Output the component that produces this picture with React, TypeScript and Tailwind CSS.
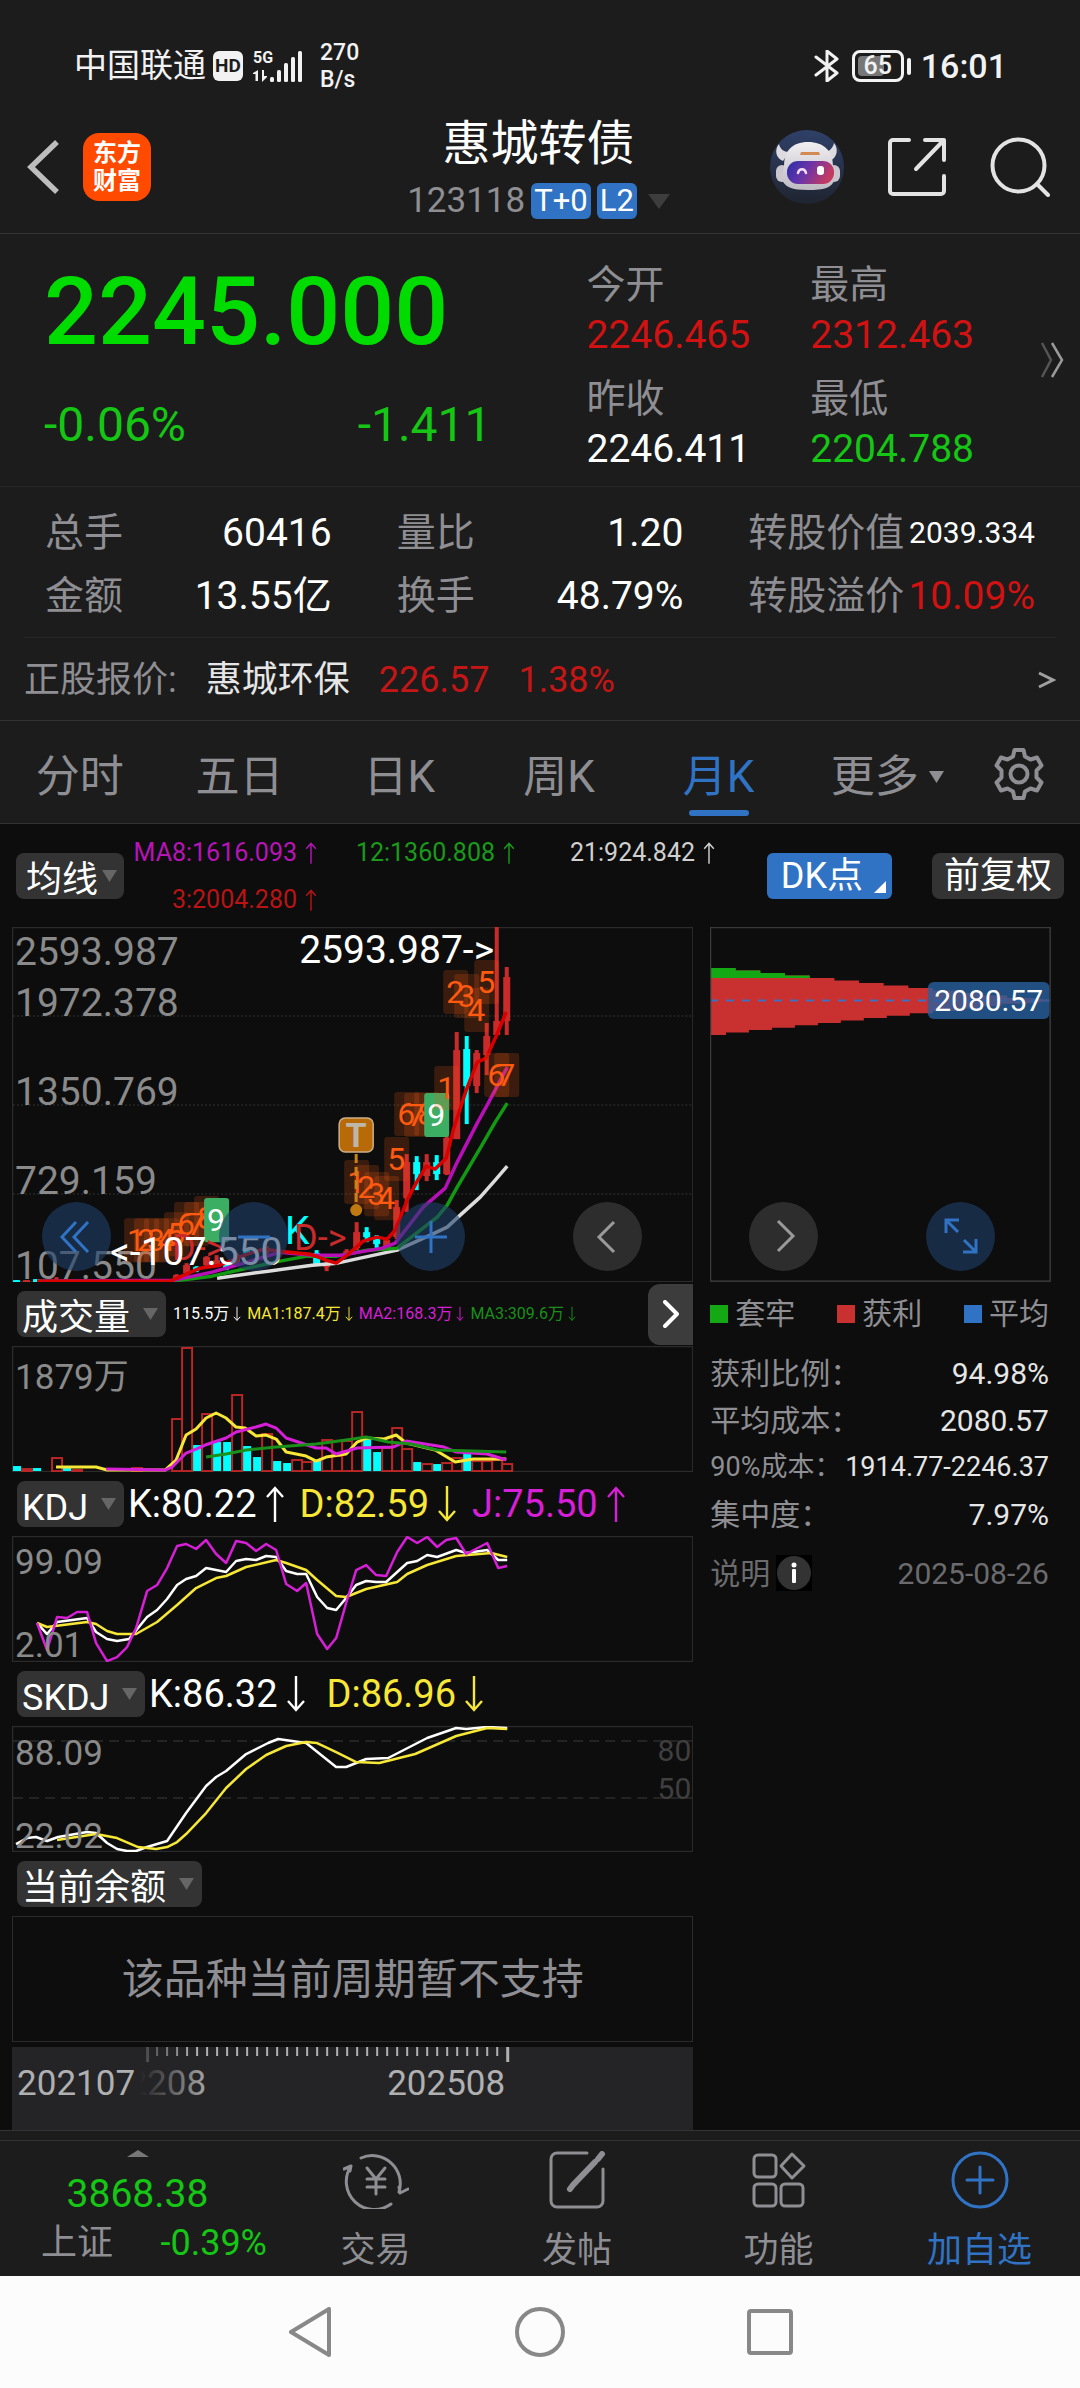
import { useState } from 'react';
import type { ReactNode } from 'react';

type Color = 'up' | 'down';

interface Candle {
  x: number;
  color: Color;
  high: number;
  low: number;
  top: number;
  bottom: number;
}

interface Tag {
  n: string;
  x: number;
  y: number;
}

const RED = '#c92a2a';
const CYAN = '#00ffff';
const YELLOW = '#f7e838';
const MAGENTA = '#d61fd6';

const CANDLES: Candle[] = [
  { x: 4, color: 'down', high: 353, low: 355, top: 353, bottom: 355 },
  { x: 14, color: 'up', high: 353, low: 355, top: 353, bottom: 355 },
  { x: 24, color: 'down', high: 352, low: 355, top: 352, bottom: 355 },
  { x: 44, color: 'up', high: 350, low: 355, top: 353, bottom: 355 },
  { x: 164, color: 'up', high: 347, low: 352, top: 348, bottom: 352 },
  { x: 174, color: 'up', high: 336, low: 349, top: 338, bottom: 346 },
  { x: 184, color: 'down', high: 339, low: 345, top: 340, bottom: 343 },
  { x: 194, color: 'up', high: 329, low: 341, top: 330, bottom: 338 },
  { x: 204, color: 'up', high: 328, low: 340, top: 333, bottom: 338 },
  { x: 214, color: 'down', high: 334, low: 343, top: 338, bottom: 341 },
  { x: 224, color: 'up', high: 326, low: 338, top: 328, bottom: 335 },
  { x: 234, color: 'down', high: 322, low: 328, top: 323, bottom: 326 },
  { x: 254, color: 'up', high: 319, low: 327, top: 321, bottom: 325 },
  { x: 304, color: 'down', high: 323, low: 338, top: 326, bottom: 337 },
  { x: 314, color: 'up', high: 332, low: 344, top: 336, bottom: 340 },
  { x: 334, color: 'up', high: 322, low: 329, top: 324, bottom: 327 },
  { x: 344, color: 'up', high: 295, low: 323, top: 305, bottom: 321 },
  { x: 354, color: 'down', high: 300, low: 315, top: 305, bottom: 310 },
  { x: 364, color: 'down', high: 308, low: 322, top: 312, bottom: 317 },
  { x: 374, color: 'up', high: 311, low: 320, top: 313, bottom: 319 },
  { x: 384, color: 'up', high: 273, low: 312, top: 280, bottom: 310 },
  { x: 394, color: 'up', high: 227, low: 285, top: 235, bottom: 271 },
  { x: 404, color: 'down', high: 229, low: 263, top: 235, bottom: 247 },
  { x: 414, color: 'up', high: 227, low: 254, top: 235, bottom: 249 },
  { x: 424, color: 'down', high: 228, low: 253, top: 235, bottom: 247 },
  { x: 434, color: 'up', high: 205, low: 248, top: 211, bottom: 247 },
  { x: 444, color: 'up', high: 105, low: 212, top: 123, bottom: 212 },
  { x: 454, color: 'down', high: 109, low: 197, top: 122, bottom: 159 },
  { x: 464, color: 'up', high: 123, low: 166, top: 126, bottom: 159 },
  { x: 474, color: 'up', high: 96, low: 148, top: 109, bottom: 128 },
  { x: 484, color: 'up', high: 0, low: 108, top: 94, bottom: 108 },
  { x: 494, color: 'up', high: 40, low: 108, top: 50, bottom: 94 },
];

const PRICE_LINES = [
  { stroke: '#dcdcdc', points: '205,351 256,344 300,338 325,336 385,323 418,308 435,300 448,288 468,270 483,253 495,239' },
  { stroke: '#139a13', points: '25,354 160,354 200,349 240,340 268,334 295,329 325,329 355,323 385,321 425,290 435,278 445,260 468,221 483,195 495,176' },
  { stroke: '#b80fb8', points: '25,354 162,353 200,345 235,335 268,325 300,328 330,328 370,321 383,316 411,280 433,261 445,235 465,196 476,176 495,140' },
  { stroke: '#d90000', points: '25,354 158,354 188,341 208,338 235,327 252,322 268,324 298,327 314,333 324,336 335,328 351,314 365,310 375,312 383,303 395,273 405,254 414,239 423,242 434,231 441,203 454,163 465,135 474,131 484,109 494,85' },
];

const TAGS: Tag[] = [
  { n: '1', x: 112, y: 291 },
  { n: '2', x: 122, y: 291 },
  { n: '3', x: 132, y: 291 },
  { n: '4', x: 142, y: 291 },
  { n: '5', x: 152, y: 285 },
  { n: '6', x: 162, y: 275 },
  { n: '7', x: 172, y: 275 },
  { n: '8', x: 182, y: 269 },
  { n: '9', x: 192, y: 271 },
  { n: '1', x: 332, y: 233 },
  { n: '2', x: 342, y: 238 },
  { n: '3', x: 352, y: 245 },
  { n: '4', x: 362, y: 249 },
  { n: '5', x: 372, y: 210 },
  { n: '6', x: 382, y: 165 },
  { n: '7', x: 392, y: 166 },
  { n: '8', x: 402, y: 165 },
  { n: '9', x: 412, y: 166 },
  { n: '1', x: 422, y: 139 },
  { n: '2', x: 431, y: 43 },
  { n: '3', x: 442, y: 47 },
  { n: '4', x: 452, y: 61 },
  { n: '5', x: 462, y: 33 },
  { n: '6', x: 472, y: 126 },
  { n: '7', x: 482, y: 126 },
];

// [month index, top of bar, direction]
const VOLUMES: [number, number, Color][] = [
  [0, 120, 'down'], [1, 122, 'up'], [2, 122, 'down'], [4, 111, 'up'], [5, 122, 'down'], [6, 123, 'up'],
  [12, 121, 'up'], [16, 72, 'up'], [17, 1, 'up'], [18, 99, 'down'], [19, 67, 'up'], [20, 96, 'down'],
  [21, 96, 'down'], [22, 48, 'up'], [23, 100, 'down'], [24, 111, 'down'], [25, 87, 'up'], [26, 115, 'down'],
  [27, 117, 'down'], [28, 113, 'up'], [29, 115, 'up'], [30, 114, 'down'], [31, 93, 'up'], [32, 109, 'up'],
  [33, 94, 'up'], [34, 65, 'up'], [35, 93, 'down'], [36, 106, 'down'], [37, 101, 'up'], [38, 81, 'up'],
  [39, 102, 'up'], [40, 116, 'down'], [41, 117, 'up'], [42, 118, 'down'], [43, 116, 'up'], [44, 111, 'up'],
  [45, 108, 'down'], [46, 114, 'up'], [47, 114, 'up'], [48, 113, 'up'], [49, 117, 'up'],
];

const VOLUME_LINES = [
  { stroke: YELLOW, points: '44,121 84,121 95,124 153,124 164,114 174,89 184,83 194,72 204,67 214,72 224,81 233,82 244,90 254,89 264,93 274,106 294,110 304,115 314,111 334,108 345,96 354,92 372,93 384,89 394,97 423,104 443,116 461,113 494,113' },
  { stroke: MAGENTA, points: '94,123 153,124 160,121 174,107 184,103 193,99 214,92 224,86 244,81 254,78 264,82 274,92 304,102 314,102 324,108 345,102 381,101 394,95 432,101 444,106 475,108 494,114' },
  { stroke: '#1a8f1a', points: '194,111 214,108 234,104 264,101 304,98 334,94 354,91 376,96 399,98 425,104 494,106' },
];

const KDJ_LINES = [
  { stroke: '#ffffff', points: '25,87 35,98 45,86 75,82 84,96 95,103 105,105 117,103 135,81 145,74 155,63 165,49 174,43 184,40 194,32 214,36 224,25 234,23 244,24 254,20 264,21 274,35 285,38 294,38 305,61 315,72 324,74 334,62 344,49 354,45 364,46 374,46 395,27 405,25 415,19 425,21 444,14 454,17 475,14 486,24 495,24' },
  { stroke: YELLOW, points: '25,87 35,91 75,86 84,88 95,95 105,98 124,98 145,86 165,69 184,52 204,42 214,40 234,31 264,24 274,27 294,34 305,44 324,60 334,61 354,53 385,46 395,38 415,29 444,20 479,17 495,21' },
  { stroke: MAGENTA, points: '25,87 35,114 45,81 55,82 65,76 75,76 84,107 95,125 105,121 115,111 124,92 135,55 145,49 155,32 165,10 174,8 184,13 194,4 204,18 214,27 224,5 234,7 244,15 254,8 264,14 274,48 285,55 294,47 305,98 315,113 324,102 334,67 344,34 354,29 364,39 374,40 385,16 395,1 405,7 415,1 425,11 434,4 444,2 454,18 475,7 486,32 495,30' },
];

const SKDJ_LINES = [
  { stroke: '#ffffff', points: '4,118 15,112 24,111 35,115 46,111 75,106 84,107 95,117 105,123 115,125 124,125 135,121 155,115 174,87 194,60 204,51 214,45 234,28 256,17 266,13 294,17 324,41 334,41 354,33 376,32 415,12 444,2 454,3 475,1 495,2' },
  { stroke: YELLOW, points: '45,114 84,108 105,112 126,121 144,123 155,121 165,116 174,108 194,87 214,62 234,43 254,29 274,20 294,16 305,17 324,26 344,36 367,37 403,28 444,10 475,2 495,3' },
];

const TABS = ['分时', '五日', '日K', '周K', '月K'];

function Caret({ className = 'text-[#666]' }: { className?: string }) {
  return (
    <svg className={`h-3 w-[15px] shrink-0 ${className}`} viewBox="0 0 15 12" aria-hidden="true">
      <path d="M0 0h15L7.500 12z" fill="currentColor" />
    </svg>
  );
}

function Arrow({ up, className = 'h-9 w-5' }: { up?: boolean; className?: string }) {
  return (
    <svg className={`shrink-0 ${className}`} viewBox="0 0 20 36" fill="none" stroke="currentColor" strokeWidth="2.400" aria-hidden="true">
      {up ? <path d="M10 36V2M2 11l8-9 8 9" /> : <path d="M10 0v34M2 25l8 9 8-9" />}
    </svg>
  );
}

function Picker({ label, value, tight }: { label: string; value: string; tight?: boolean }) {
  return (
    <div className={`flex h-[46px] shrink-0 items-center rounded-lg bg-[#333] text-white ${tight ? 'gap-[3px] pr-[7px] pl-[10px]' : 'gap-3 pr-2 pl-[5px]'}`}>
      <select aria-label={label} className="h-[46px] appearance-none bg-transparent text-[36px] outline-none" defaultValue={value}>
        <option value={value}>{value}</option>
      </select>
      <Caret />
    </div>
  );
}

function StatusBar() {
  return (
    <div className="flex items-center justify-between pt-[39px] pr-[73px] pl-[74px] text-[#f2f2f2]">
      <div className="flex items-center">
        <span className="text-[33px] leading-[54px]">中国联通</span>
        <span className="ml-[7px] flex h-[30px] w-[30px] items-center justify-center rounded-md bg-[#f2f2f2] text-[19px] font-bold text-[#1c1c1c]">HD</span>
        <svg className="ml-[10px] h-[34px] w-[51px]" viewBox="0 0 51 34" fill="#f2f2f2" aria-label="5G">
          <text x="0" y="14" fontSize="16" fontWeight="700" fontFamily="Roboto">5G</text>
          <path d="M5 21v11H2.500v-7H0v-1zM9 21h2v6h3v1l-5 5z" />
          <rect x="17" y="28" width="4" height="5" rx="1.500" />
          <rect x="24" y="21" width="4" height="12" rx="1.500" />
          <rect x="31" y="14" width="4" height="19" rx="1.500" />
          <rect x="38" y="8" width="4" height="25" rx="1.500" />
          <rect x="45" y="2" width="4" height="31" rx="1.500" />
        </svg>
        <span className="ml-4 text-[23px] leading-[27px] font-medium">
          270
          <br />
          B/s
        </span>
      </div>
      <div className="flex items-center">
        <svg className="h-8 w-[26px]" viewBox="0 0 26 32" fill="none" stroke="currentColor" strokeWidth="3" strokeLinejoin="round" strokeLinecap="round" aria-label="蓝牙">
          <path d="M2 7l21 16-10 8V1l10 8L2 25" />
        </svg>
        <div className="relative ml-3 flex h-8 w-[52px] items-center justify-center rounded-lg border-[3px] border-[#f2f2f2] text-[25px] font-medium">
          <span className="absolute inset-y-[3px] left-[3px] w-[26px] rounded-sm bg-[#777]" />
          <span className="relative">65</span>
        </div>
        <span className="ml-[3px] h-[17px] w-1 rounded-full bg-[#f2f2f2]" />
        <span className="ml-[10px] text-[34px] leading-[54px] font-medium">16:01</span>
      </div>
    </div>
  );
}

function Robot() {
  return (
    <svg className="h-[74px] w-[74px]" viewBox="0 0 74 74" aria-hidden="true">
      <defs>
        <linearGradient id="sky" x1="0" y1="0" x2="0" y2="1">
          <stop offset="0" stopColor="#2f4068" />
          <stop offset="1" stopColor="#1f2430" />
        </linearGradient>
        <linearGradient id="visor" x1="0" y1="0" x2="1" y2="0.300">
          <stop offset="0" stopColor="#2a2fa8" />
          <stop offset="0.500" stopColor="#6b34a8" />
          <stop offset="1" stopColor="#c23a62" />
        </linearGradient>
        <linearGradient id="shell" x1="0" y1="0" x2="0" y2="1">
          <stop offset="0" stopColor="#f1eff2" />
          <stop offset="1" stopColor="#bdbac2" />
        </linearGradient>
      </defs>
      <circle cx="37" cy="37" r="37" fill="url(#sky)" />
      <path d="M9 14c-5 6-3 14 4 17l6-9c-5 0-9-3-10-8zM64 13c5 6 3 15-4 18l-6-9c5 0 9-4 10-9z" fill="#dddbe0" />
      <rect x="6" y="35" width="12" height="17" rx="6" fill="#c9c6cd" />
      <rect x="58" y="35" width="12" height="17" rx="6" fill="#c9c6cd" />
      <path d="M38 12c16 0 25 9 25 24 0 5 3 9 2 13-3 9-11 11-27 11s-24-3-26-11c-1-5 2-8 2-13 0-15 8-24 24-24z" fill="url(#shell)" />
      <path d="M31 22h18l1 3H30z" fill="#d38a52" />
      <rect x="17" y="31" width="47" height="23" rx="11" fill="url(#visor)" />
      <path d="M28 43c1-5 7-5 8 0" fill="none" stroke="#f3dcf6" strokeWidth="2.500" strokeLinecap="round" />
      <rect x="47" y="36" width="7" height="9" rx="3" fill="#fff" />
    </svg>
  );
}

function Header() {
  return (
    <header className="border-b border-[#333] bg-[#1c1c1c]">
      <StatusBar />
      <div className="grid grid-cols-[1fr_auto_1fr] items-center pt-[21px] pr-[30px] pb-[14px] pl-[27px]">
        <div className="flex items-center gap-6">
          <button type="button" aria-label="返回">
            <svg className="h-[54px] w-8" viewBox="0 0 32 54" fill="none" stroke="#bdbdbd" strokeWidth="5.500">
              <path d="M30 2L4 27l26 25" />
            </svg>
          </button>
          <a href="#home" className="flex h-[68px] w-[68px] items-center justify-center rounded-2xl bg-[#ff4a00] text-center text-[24px] leading-7 font-bold text-white">
            东方
            <br />
            财富
          </a>
        </div>
        <div className="text-center">
          <h1 className="text-[48px] leading-[60px] text-white">惠城转债</h1>
          <div className="mt-[9px] flex items-center justify-center">
            <span className="text-[35px] leading-9 text-[#8e8e93]">123118</span>
            <span className="ml-[6px] rounded-md bg-[#3073c4] px-[3px] text-[31px] leading-9 text-white">T+0</span>
            <span className="ml-[6px] rounded-md bg-[#3073c4] px-[3px] text-[31px] leading-9 text-white">L2</span>
            <svg className="ml-[11px] h-[15px] w-[22px]" viewBox="0 0 22 15" aria-hidden="true">
              <path d="M0 0h22L11 15z" fill="#3d3d3d" />
            </svg>
          </div>
        </div>
        <div className="flex items-center justify-end gap-11">
          <button type="button" aria-label="智能助手">
            <Robot />
          </button>
          <button type="button" aria-label="分享">
            <svg className="h-[58px] w-[58px]" viewBox="0 0 58 58" fill="none" stroke="#e3e3e3" strokeWidth="4" strokeLinecap="round" strokeLinejoin="round">
              <path d="M21 2H5a3 3 0 0 0-3 3v48a3 3 0 0 0 3 3h48a3 3 0 0 0 3-3V38M37 2h19v20M55 3L28 31" />
            </svg>
          </button>
          <button type="button" aria-label="搜索">
            <svg className="h-[60px] w-[60px]" viewBox="0 0 60 60" fill="none" stroke="#e3e3e3" strokeWidth="4" strokeLinecap="round">
              <circle cx="28.500" cy="28.500" r="26" />
              <path d="M47 47l11 11" />
            </svg>
          </button>
        </div>
      </div>
    </header>
  );
}

function Quote({ label, value, className }: { label: string; value: string; className: string }) {
  return (
    <div className="text-[39px] leading-[50px]">
      <div className="text-[#8e8e93]">{label}</div>
      <div className={className}>{value}</div>
    </div>
  );
}

function Stat({ label, value, className = 'text-white', small }: { label: string; value: string; className?: string; small?: boolean }) {
  return (
    <div className="flex items-center justify-between whitespace-nowrap leading-[50px]">
      <span className="text-[39px] text-[#8e8e93]">{label}</span>
      <span className={`${small ? 'text-[30px]' : 'text-[39px]'} ${className}`}>{value}</span>
    </div>
  );
}

function PricePanel() {
  return (
    <section className="bg-[#1c1c1c]">
      <div className="relative grid grid-cols-[543fr_224fr_270fr] border-b border-[#262626] pt-[26px] pb-3 pl-[44px]">
        <div className="pt-1 pr-[95px]">
          <div className="text-[95px] leading-[96px] font-medium text-[#00dc00]">2245.000</div>
          <div className="mt-[41px] flex justify-between text-[48px] leading-[48px] text-[#15c615]">
            <span>-0.06%</span>
            <span>-1.411</span>
          </div>
        </div>
        <div className="flex flex-col gap-[14px]">
          <Quote label="今开" value="2246.465" className="text-[#d01212]" />
          <Quote label="昨收" value="2246.411" className="text-white" />
        </div>
        <div className="flex flex-col gap-[14px]">
          <Quote label="最高" value="2312.463" className="text-[#d01212]" />
          <Quote label="最低" value="2204.788" className="text-[#15c615]" />
        </div>
        <button type="button" aria-label="更多行情" className="absolute inset-y-0 right-4">
          <svg className="h-9 w-6" viewBox="0 0 24 36" fill="none" strokeWidth="2.500">
            <path d="M2 1l9 17-9 17" stroke="#555" />
            <path d="M12 1l10 17-10 17" stroke="#999" />
          </svg>
        </button>
      </div>
      <div className="grid grid-cols-3 gap-x-[65px] gap-y-[13px] px-[45px] pt-[21px] pb-4">
        <Stat label="总手" value="60416" />
        <Stat label="量比" value="1.20" />
        <Stat label="转股价值" value="2039.334" small />
        <Stat label="金额" value="13.55亿" />
        <Stat label="换手" value="48.79%" />
        <Stat label="转股溢价" value="10.09%" className="text-[#d01212]" />
      </div>
      <a href="#stock" className="mx-6 flex items-center gap-[29px] border-t border-[#262626] pt-[17px] pb-[15px] text-[36px] leading-[50px]">
        <span className="text-[#8e8e93]">正股报价:</span>
        <span className="text-[#e6e6e6]">惠城环保</span>
        <span className="text-[#c41616]">226.57</span>
        <span className="text-[#c41616]">1.38%</span>
        <svg className="ml-auto h-[18px] w-[18px]" viewBox="0 0 18 18" fill="none" stroke="#a0a0a0" strokeWidth="3" aria-hidden="true">
          <path d="M1 2l14 7-14 7" />
        </svg>
      </a>
    </section>
  );
}

function PeriodTabs() {
  const [active, setActive] = useState('月K');

  return (
    <nav className="grid grid-cols-[repeat(6,160fr)_122fr] border-y border-[#333] bg-[#1c1c1c] pt-[26px] pb-[7px] text-[44px] leading-[60px] text-[#8e8e93]">
      {TABS.map(tab => (
        <button key={tab} type="button" onClick={() => setActive(tab)} className="flex flex-col items-center">
          <span className={active === tab ? 'text-[#3073c4]' : ''}>{tab}</span>
          <span className={`mt-[3px] h-[6px] w-[60px] rounded-full ${active === tab ? 'bg-[#3073c4]' : ''}`} />
        </button>
      ))}
      <button type="button" className="flex h-[60px] items-center justify-center gap-[10px] pl-[18px]">
        更多
        <Caret className="text-[#8e8e93]" />
      </button>
      <button type="button" aria-label="设置" className="flex h-[54px] items-center justify-center">
        <svg className="h-[52px] w-[52px]" viewBox="0 0 52 52" fill="none" stroke="#8e8e93" strokeWidth="4" strokeLinejoin="round">
          <path d="M21.500 2h9l1.500 6.500 5.500 3 6.500-2 4.500 8-5 5v7l5 5-4.500 8-6.500-2-5.500 3-1.500 6.500h-9L20 43.500l-5.500-3-6.500 2-4.500-8 5-5v-7l-5-5 4.500-8 6.500 2 5.500-3z" />
          <circle cx="26" cy="26" r="8.500" />
        </svg>
      </button>
    </nav>
  );
}

function MaValue({ text, className }: { text: string; className: string }) {
  return (
    <span className={`flex items-center justify-end gap-2 ${className}`}>
      {text}
      <Arrow up className="h-[22px] w-3" />
    </span>
  );
}

function ChartToolbar() {
  return (
    <div className="flex items-center px-4 pt-[5px] pb-1">
      <Picker label="主图指标" value="均线" tight />
      <div className="grid grid-cols-[193px_198px_200px] text-[25px] leading-[47px]">
        <MaValue text="MA8:1616.093" className="text-[#b714b7]" />
        <MaValue text="12:1360.808" className="text-[#1a9a1a]" />
        <MaValue text="21:924.842" className="text-[#d0d0d0]" />
        <MaValue text="3:2004.280" className="text-[#b81414]" />
      </div>
      <button type="button" className="relative ml-auto rounded-md bg-[#3073c4] pr-[29px] pl-[14px] text-[36px] leading-[46px] text-white">
        DK点
        <svg className="absolute right-[6px] bottom-[6px] h-3 w-3" viewBox="0 0 12 12" aria-hidden="true">
          <path d="M12 0v12H0z" fill="#fff" />
        </svg>
      </button>
      <button type="button" className="ml-10 rounded-lg bg-[#333] px-3 text-[36px] leading-[46px] text-white">前复权</button>
    </div>
  );
}

function RoundButton({ label, gray, children }: { label: string; gray?: boolean; children: ReactNode }) {
  return (
    <button
      type="button"
      aria-label={label}
      className={`flex h-[69px] w-[69px] items-center justify-center rounded-full ${gray ? 'bg-[#2d2d2d]' : 'bg-[#1e3f6b]/60'}`}
    >
      <svg className="h-11 w-11" viewBox="0 0 44 44" fill="none" stroke={gray ? '#9a9a9a' : '#3073c4'} strokeWidth="3">
        {children}
      </svg>
    </button>
  );
}

function Frame({ height }: { height: number }) {
  return <rect x="0.500" y="0.500" width="680" height={height - 1} fill="none" stroke="#2b2b2b" strokeWidth="1.500" />;
}

function Lines({ lines, width }: { lines: { stroke: string; points: string }[]; width: number }) {
  return (
    <>
      {lines.map(line => (
        <polyline key={line.stroke} points={line.points} fill="none" stroke={line.stroke} strokeWidth={width} strokeLinejoin="round" />
      ))}
    </>
  );
}

function PriceChart() {
  return (
    <div className="relative">
      <svg className="block w-full" viewBox="0 0 681 355" role="img" aria-label="月K走势">
        <Frame height={355} />
        {[89, 178, 267].map(y => (
          <line key={y} x1="1" x2="680" y1={y} y2={y} stroke="#333" strokeDasharray="2 2" />
        ))}
        <g fill="#8a8a8a" fontSize="39">
          <text x="3" y="38">2593.987</text>
          <text x="3" y="89">1972.378</text>
          <text x="3" y="178">1350.769</text>
          <text x="3" y="267">729.159</text>
          <text x="3" y="352">107.550</text>
        </g>
        {CANDLES.map(c => (
          <g key={c.x} fill={c.color === 'up' ? RED : CYAN}>
            <rect x={c.x - 1.5} y={c.high} width="4" height={c.low - c.high} />
            <rect x={c.x - 3} y={c.top} width="7" height={c.bottom - c.top} />
          </g>
        ))}
        <Lines lines={PRICE_LINES} width={3.5} />
        {TAGS.map(tag => (
          <g key={`${tag.x}-${tag.y}`}>
            <rect
              x={tag.x}
              y={tag.y}
              width="25"
              height="44"
              rx="3"
              fill={tag.n === '9' ? '#3cae64' : '#f05a14'}
              fillOpacity={tag.n === '9' ? 1 : 0.2}
            />
            <text x={tag.x + 12} y={tag.y + 33} fontSize="32" textAnchor="middle" fill={tag.n === '9' ? '#fff' : '#ff5a10'}>
              {tag.n}
            </text>
          </g>
        ))}
        <g fontSize="39">
          <text x="160" y="333" fontSize="36" fill={RED}>D-&gt;</text>
          <text x="273" y="317" fill={CYAN}>K</text>
          <text x="282" y="323" fontSize="36" fill={RED}>D-&gt;</text>
          <text x="98" y="338" fill="#fff">&lt;-107.550</text>
          <text x="287" y="36" fill="#fff">2593.987-&gt;</text>
        </g>
        <line x1="344" x2="344" y1="227" y2="277" stroke="#c8821a" strokeWidth="3" strokeDasharray="9 4" />
        <circle cx="344" cy="283" r="6" fill="#c07810" />
        <rect x="327" y="191" width="34" height="34" rx="6" fill="#b86a08" stroke="#cbb08a" strokeWidth="1.500" />
        <text x="344" y="220" fontSize="34" fontWeight="700" textAnchor="middle" fill="#bdb6a9">T</text>
      </svg>
      <div className="absolute bottom-[11px] left-[30px] flex gap-[108px]">
        <RoundButton label="最早">
          <path d="M21 7L7 22l14 15M33 7L19 22l14 15" />
        </RoundButton>
        <RoundButton label="缩小">
          <path d="M6 22h32" />
        </RoundButton>
        <RoundButton label="放大">
          <path d="M6 22h32M22 6v32" />
        </RoundButton>
        <RoundButton label="向左" gray>
          <path d="M28 7L13 22l15 15" />
        </RoundButton>
      </div>
    </div>
  );
}

function VolumeChart() {
  return (
    <svg className="block w-full" viewBox="0 0 681 126" role="img" aria-label="成交量">
      <Frame height={126} />
      <text x="3" y="43" fontSize="35" fill="#8a8a8a">1879万</text>
      {VOLUMES.map(([i, top, color]) =>
        color === 'up' ? (
          <rect key={i} x={i * 10} y={top + 1} width="10" height={Math.max(124 - top, 2)} fill="#0d0d0d" stroke="#b82626" strokeWidth="2" />
        ) : (
          <rect key={i} x={i * 10 + 1} y={top} width="8" height={125 - top} fill={CYAN} />
        ),
      )}
      <Lines lines={VOLUME_LINES} width={3} />
    </svg>
  );
}

function SubHeader({ label, value, children }: { label: string; value: string; children?: ReactNode }) {
  return (
    <div className="flex h-16 items-center pl-[5px]">
      <Picker label={label} value={value} />
      {children}
    </div>
  );
}

function Reading({ text, up, className }: { text: string; up?: boolean; className: string }) {
  return (
    <span className={`flex items-center gap-2 text-[38px] ${className}`}>
      {text}
      <Arrow up={up} />
    </span>
  );
}

function VolumeReading({ text, className }: { text: string; className: string }) {
  return (
    <span className={`flex items-center gap-1 ${className}`}>
      {text}
      <Arrow className="h-[26px] w-2" />
    </span>
  );
}

function Timeline() {
  return (
    <svg className="mt-[5px] block w-full bg-[#242427]" viewBox="0 0 681 83" role="img" aria-label="时间轴">
      <defs>
        <linearGradient id="fade" gradientUnits="userSpaceOnUse" x1="128" x2="200" y1="0" y2="0">
          <stop offset="0" stopColor="#242427" />
          <stop offset="1" stopColor="#b0b0b0" />
        </linearGradient>
      </defs>
      {Array.from({ length: 37 }, (_, i) => (
        <rect
          key={i}
          x={134 + i * 10}
          y="0"
          width={i === 36 || i === 0 ? 3 : 2}
          height={i === 36 || i === 0 ? 15 : 9}
          fill="#b0b0b0"
          opacity={Math.min(1, 0.3 + i * 0.15)}
        />
      ))}
      <g fontSize="35" fill="#b0b0b0">
        <text x="194" y="48" textAnchor="end" fill="url(#fade)">2208</text>
        <text x="5" y="48">202107</text>
        <text x="375" y="48">202508</text>
      </g>
    </svg>
  );
}

function ChipChart() {
  const top: string[] = [];
  const bottom: string[] = [];
  for (let i = 0; i < 13; i++) {
    const y = 41 + i * 2.5;
    top.push(`${i * 24.7 + 1},${y} ${i * 24.7 + 25.7},${y}`);
  }
  for (let i = 0; i < 14; i++) {
    const y = 108 - i * 2.4;
    bottom.unshift(`${i * 23 + 16},${y} ${Math.max(i * 23 - 7, 1)},${y}`);
  }
  const shape = `${top.join(' ')} 340,73 340,74 ${bottom.join(' ')}`;

  return (
    <div className="relative">
      <svg className="block w-full" viewBox="0 0 341 355" role="img" aria-label="筹码分布">
        <defs>
          <clipPath id="trapped">
            <rect x="0" y="0" width="341" height="51" />
          </clipPath>
        </defs>
        <polygon points={shape} fill="#c93030" />
        <polygon points={shape} fill="#14a814" clipPath="url(#trapped)" />
        <line x1="1" x2="340" y1="73.500" y2="73.500" stroke="#3f6fc0" strokeWidth="2" strokeDasharray="8 8" strokeDashoffset="1" />
        <rect x="218" y="55" width="122" height="37" rx="6" fill="#28609f" fillOpacity="0.800" />
        <text x="279" y="84" fontSize="30" textAnchor="middle" fill="#fff">2080.57</text>
        <rect x="0.500" y="0.500" width="340" height="354" fill="none" stroke="#3a3a3a" strokeWidth="1.500" />
      </svg>
      <div className="absolute bottom-[11px] left-[39px] flex gap-[108px]">
        <RoundButton label="向右" gray>
          <path d="M16 7l15 15-15 15" />
        </RoundButton>
        <RoundButton label="全屏">
          <path d="M20 6H7v13M7 6l12 12M24 38h13V25M37 38L25 26" />
        </RoundButton>
      </div>
    </div>
  );
}

function Legend({ label, className }: { label: string; className: string }) {
  return (
    <span className="flex items-center gap-[7px]">
      <span className={`h-[18px] w-[18px] ${className}`} />
      {label}
    </span>
  );
}

function ChipRow({ label, value, small }: { label: string; value: string; small?: boolean }) {
  return (
    <div className={`flex items-center justify-between whitespace-nowrap leading-[47px] ${small ? 'text-[27px]' : 'text-[30px]'}`}>
      <dt className="text-[#8e8e93]">{label}</dt>
      <dd className="text-[#e6e6e6]">{value}</dd>
    </div>
  );
}

function ChipPanel() {
  return (
    <aside>
      <ChipChart />
      <div className="flex h-16 items-center justify-between pr-[2px] text-[30px] text-[#8e8e93]">
        <Legend label="套牢" className="bg-[#14a814]" />
        <Legend label="获利" className="bg-[#c93030]" />
        <Legend label="平均" className="bg-[#3073c4]" />
      </div>
      <dl className="pt-1 pr-[2px]">
        <ChipRow label="获利比例：" value="94.98%" />
        <ChipRow label="平均成本：" value="2080.57" />
        <ChipRow label="90%成本：" value="1914.77-2246.37" small />
        <ChipRow label="集中度：" value="7.97%" />
      </dl>
      <div className="mt-3 flex items-center justify-between pr-[2px] text-[30px] leading-[47px] text-[#6b6b6e]">
        <button type="button" className="flex items-center gap-[6px]">
          说明
          <span className="flex h-9 w-9 items-center justify-center bg-black">
            <svg className="h-9 w-9" viewBox="0 0 36 36" aria-hidden="true">
              <circle cx="18" cy="18" r="17" fill="#333" />
              <circle cx="18" cy="10" r="2.500" fill="#fff" />
              <rect x="16" y="14" width="4" height="14" rx="1" fill="#fff" />
            </svg>
          </span>
        </button>
        <time>2025-08-26</time>
      </div>
    </aside>
  );
}

function NavItem({ label, className = 'text-[#8e8e93]', children }: { label: string; className?: string; children: ReactNode }) {
  return (
    <button type="button" className={`flex flex-col items-center pt-[10px] text-[35px] leading-[44px] ${className}`}>
      <svg className="mb-5 h-[58px] w-[66px]" viewBox="0 0 66 58" fill="none" stroke="currentColor" strokeWidth="3" strokeLinecap="round" strokeLinejoin="round" aria-hidden="true">
        {children}
      </svg>
      {label}
    </button>
  );
}

function BottomNav() {
  return (
    <footer>
      <div className="border-t border-[#333] bg-[#1c1c1c] pt-[9px]">
        <div className="grid grid-cols-[275fr_201fr_202fr_201fr_201fr] border-t border-[#333] pb-[3px]">
          <a href="#index" className="pt-[9px] text-[#15c615]">
            <svg className="mx-auto h-[7px] w-[22px]" viewBox="0 0 22 7" aria-hidden="true">
              <path d="M11 0l11 7H0z" fill="#777" />
            </svg>
            <div className="mt-[14px] text-center text-[39px] leading-[46px]">3868.38</div>
            <div className="mt-[6px] flex justify-between pr-2 pl-[41px] text-[36px] leading-10">
              <span className="text-[#8e8e93]">上证</span>
              <span>-0.39%</span>
            </div>
          </a>
          <NavItem label="交易">
            <path d="M18 7a28 28 0 0 1 38 34M48 53A28 28 0 0 1 8 15M1 18l7-3M8 15l-1 5M65 38l-8 4-1-6" />
            <path d="M24 17l9 11 9-11M33 28v15M24 28h18M24 36h18" />
          </NavItem>
          <NavItem label="发帖">
            <path d="M43 2H13a6 6 0 0 0-6 6v42a6 6 0 0 0 6 6h40a6 6 0 0 0 6-6V18" />
            <path d="M58 3l-4 5M51 11L29 34l-3 4" strokeWidth="6" />
          </NavItem>
          <NavItem label="功能">
            <rect x="8" y="4" width="22" height="22" rx="4" />
            <path d="M46 3l12 12-12 12-11-12z" />
            <rect x="8" y="33" width="22" height="22" rx="4" />
            <rect x="35" y="33" width="22" height="22" rx="4" />
          </NavItem>
          <NavItem label="加自选" className="text-[#3073c4]">
            <circle cx="33" cy="29" r="27" />
            <path d="M33 16v26M20 29h26" />
          </NavItem>
        </div>
      </div>
      <div className="flex items-center justify-center gap-[180px] bg-[#fcfcfc] py-[31px]">
        <button type="button" aria-label="系统返回">
          <svg className="h-[50px] w-[50px]" viewBox="0 0 50 50" fill="none" stroke="#888" strokeWidth="4" strokeLinejoin="round">
            <path d="M44 2v46L6 25z" />
          </svg>
        </button>
        <button type="button" aria-label="主屏幕">
          <svg className="h-[50px] w-[50px]" viewBox="0 0 50 50" fill="none" stroke="#888" strokeWidth="4">
            <circle cx="25" cy="25" r="23" />
          </svg>
        </button>
        <button type="button" aria-label="最近任务">
          <svg className="h-[50px] w-[50px]" viewBox="0 0 50 50" fill="none" stroke="#888" strokeWidth="4">
            <rect x="4" y="4" width="42" height="42" rx="2" />
          </svg>
        </button>
      </div>
    </footer>
  );
}

export default function App() {
  return (
    <div className="bg-[#0d0d0d] font-['Roboto','Noto_Sans_CJK_SC',sans-serif]">
      <Header />
      <PricePanel />
      <PeriodTabs />
      <main>
        <ChartToolbar />
        <div className="grid grid-cols-[2fr_1fr] gap-[17px] pr-[29px] pl-3">
          <div>
            <PriceChart />
            <SubHeader label="副图一" value="成交量">
              <div className="ml-[7px] flex gap-[6px] font-['Liberation_Sans_Narrow','Roboto','Noto_Sans_CJK_SC',sans-serif] text-[16px]">
                <VolumeReading text="115.5万" className="text-white" />
                <VolumeReading text="MA1:187.4万" className="text-[#f7e838]" />
                <VolumeReading text="MA2:168.3万" className="text-[#d61fd6]" />
                <VolumeReading text="MA3:309.6万" className="text-[#1a8f1a]" />
              </div>
              <button type="button" aria-label="展开" className="ml-auto flex h-[61px] w-[45px] items-center justify-center rounded-l-xl bg-[#3c3c3c]">
                <svg className="h-7 w-4" viewBox="0 0 16 28" fill="none" stroke="#fff" strokeWidth="4" strokeLinecap="round" strokeLinejoin="round">
                  <path d="M2 2l12 12L2 26" />
                </svg>
              </button>
            </SubHeader>
            <VolumeChart />
            <SubHeader label="副图二" value="KDJ">
              <div className="ml-1 flex gap-[15px]">
                <Reading text="K:80.22" up className="text-white" />
                <Reading text="D:82.59" className="text-[#f7e838]" />
                <Reading text="J:75.50" up className="text-[#d61fd6]" />
              </div>
            </SubHeader>
            <svg className="block w-full" viewBox="0 0 681 126" role="img" aria-label="KDJ">
              <Frame height={126} />
              <Lines lines={KDJ_LINES} width={2.5} />
              <g fontSize="35" fill="#8a8a8a">
                <text x="3" y="38">99.09</text>
                <text x="3" y="121">2.01</text>
              </g>
            </svg>
            <SubHeader label="副图三" value="SKDJ">
              <div className="ml-1 flex gap-[21px]">
                <Reading text="K:86.32" className="text-white" />
                <Reading text="D:86.96" className="text-[#f7e838]" />
              </div>
            </SubHeader>
            <svg className="block w-full" viewBox="0 0 681 126" role="img" aria-label="SKDJ">
              <Frame height={126} />
              <g stroke="#3a3a3a" strokeDasharray="10 6">
                <line x1="1" x2="680" y1="15" y2="15" />
                <line x1="1" x2="680" y1="72" y2="72" />
              </g>
              <g fontSize="30" fill="#3f3f3f">
                <text x="679" y="35" textAnchor="end">80</text>
                <text x="679" y="73" textAnchor="end">50</text>
              </g>
              <Lines lines={SKDJ_LINES} width={2.5} />
              <g fontSize="35" fill="#8a8a8a">
                <text x="3" y="39">88.09</text>
                <text x="3" y="122">22.02</text>
              </g>
            </svg>
            <SubHeader label="副图四" value="当前余额" />
            <div className="flex h-[126px] items-center justify-center border border-[#2b2b2b] text-[42px] text-[#8e8e93]">该品种当前周期暂不支持</div>
            <Timeline />
          </div>
          <ChipPanel />
        </div>
      </main>
      <BottomNav />
    </div>
  );
}
